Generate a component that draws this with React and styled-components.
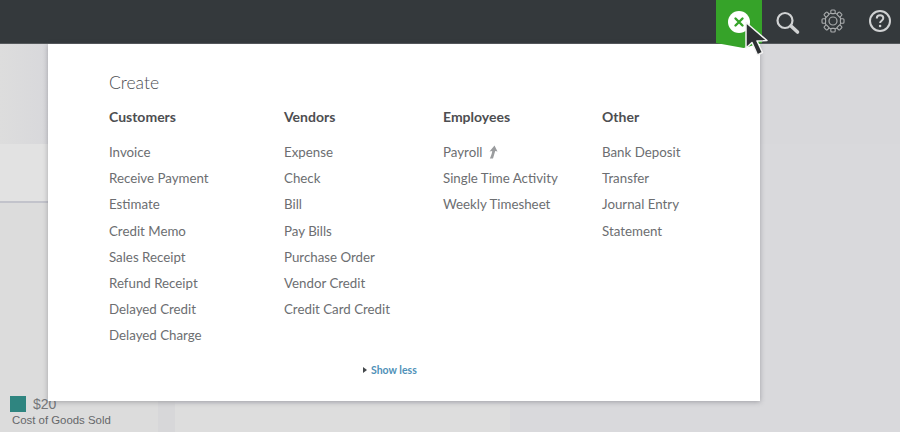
import React from "react";
import styled, { createGlobalStyle } from "styled-components";

const Global = createGlobalStyle`
  html, body { margin: 0; padding: 0; background: #d9d9dc; }
  body { font-family: "Lato", "Noto Sans", "Liberation Sans", sans-serif; }
`;

const Page = styled.div`
  position: relative;
  width: 900px;
  height: 432px;
  overflow: hidden;
  background: #d9d9dc;
`;

const TopBar = styled.header`
  height: 43px;
  background: #34393c;
  border-bottom: 1px solid #55595c;
  display: flex;
  justify-content: flex-end;
  align-items: flex-start;
`;

const CreateTab = styled.div`
  width: 46px;
  height: 48px;
  background: #36a329;
  clip-path: polygon(0 0, 100% 0, 100% 43px, 60% 48px, 0 43px);
  display: flex;
  justify-content: center;
  padding-top: 11px;
  box-sizing: border-box;
  margin-right: 12px;
  position: relative;
  z-index: 3;
`;

const CloseCircle = styled.div`
  width: 22px;
  height: 22px;
  border-radius: 50%;
  background: #fff;
  display: flex;
  align-items: center;
  justify-content: center;
`;

const ToolIcon = styled.div`
  width: 28px;
  height: 28px;
  margin-top: 7px;
  margin-right: ${(p) => p.$gap}px;
  color: ${(p) => p.$color || "#d0d2d3"};
`;

const Backdrop = styled.main`
  height: 388px;
  display: flex;
  flex-direction: column;
  background: #d9d9dc;
`;

const TopBand = styled.div`
  height: 100px;
  background: linear-gradient(90deg, #dddddd 0, #d8d8db 48px);
`;

const LightRow = styled.div`
  width: 48px;
  height: 57px;
  background: #e2e2e2;
  border-bottom: 2px solid #c2c3cb;
`;

const Spacer = styled.div`
  flex: 1;
  background: linear-gradient(90deg, #dcdcdc 0, #dcdcdc 158px, #d7d7d9 158px, #d7d7d9 175px, #d9d9dc 175px);
`;

const Legend = styled.div`
  position: absolute;
  left: 10px;
  top: 396px;
  z-index: 1;
`;

const LegendTop = styled.div`
  display: flex;
  align-items: center;
  gap: 7px;
`;

const Swatch = styled.span`
  width: 16px;
  height: 16px;
  background: #2f8580;
`;

const Amount = styled.span`
  font-size: 14px;
  line-height: 16px;
  color: #747679;
  font-family: "Liberation Sans", sans-serif;
`;

const LegendLabel = styled.div`
  font-family: "Liberation Sans", sans-serif;
  font-size: 11.4px;
  line-height: 14px;
  color: #65676a;
  margin: 1px 0 0 2px;
`;

const BottomCard = styled.div`
  position: absolute;
  left: 175px;
  top: 404px;
  width: 335px;
  height: 28px;
  background: #dddddd;
`;

const Panel = styled.section`
  position: absolute;
  left: 48px;
  top: 44px;
  width: 712px;
  height: 357px;
  background: #fff;
  box-shadow: 0 1px 5px rgba(70, 70, 80, 0.4);
  padding: 29px 0 0 61px;
  box-sizing: border-box;
  z-index: 2;
`;

const Title = styled.h2`
  margin: 0;
  font-size: 17.5px;
  line-height: 20px;
  font-weight: 300;
  color: #4c4e51;
`;

const Columns = styled.div`
  display: flex;
  margin-top: 14px;
`;

const Column = styled.div`
  width: ${(p) => p.$w}px;
`;

const Heading = styled.h3`
  margin: 0 0 12px;
  font-size: 14px;
  line-height: 20px;
  font-weight: 700;
  color: #4d4e51;
`;

const Item = styled.div`
  height: 26.2px;
  line-height: 26px;
  font-size: 13.3px;
  color: #6c6e71;
  white-space: nowrap;
  display: flex;
  align-items: center;
  gap: 5px;
`;

const ShowLess = styled.div`
  position: absolute;
  left: 315px;
  top: 319px;
  display: flex;
  align-items: center;
  gap: 4px;
  font-size: 10.5px;
  line-height: 14px;
  font-weight: 700;
  color: #4f91b8;
`;

const Caret = styled.span`
  width: 0;
  height: 0;
  border-left: 4px solid #44484c;
  border-top: 3.5px solid transparent;
  border-bottom: 3.5px solid transparent;
`;

const Cursor = styled.svg`
  position: absolute;
  left: 744px;
  top: 21px;
  z-index: 4;
`;

const columns = [
  { w: 175, title: "Customers", items: ["Invoice", "Receive Payment", "Estimate", "Credit Memo", "Sales Receipt", "Refund Receipt", "Delayed Credit", "Delayed Charge"] },
  { w: 159, title: "Vendors", items: ["Expense", "Check", "Bill", "Pay Bills", "Purchase Order", "Vendor Credit", "Credit Card Credit"] },
  { w: 159, title: "Employees", items: ["Payroll", "Single Time Activity", "Weekly Timesheet"] },
  { w: 120, title: "Other", items: ["Bank Deposit", "Transfer", "Journal Entry", "Statement"] },
];

const teeth = Array.from({ length: 8 }, (_, i) => i * 45);

export default function App() {
  return (
    <Page>
      <Global />
      <TopBar>
        <CreateTab>
          <CloseCircle>
            <svg width="12" height="12" viewBox="0 0 12 12">
              <path d="M2.5 2.5l7 7M9.5 2.5l-7 7" stroke="#36a329" strokeWidth="2.4" strokeLinecap="round" />
            </svg>
          </CloseCircle>
        </CreateTab>
        <ToolIcon $gap={17}>
          <svg width="28" height="28" viewBox="0 0 28 28" fill="none">
            <circle cx="11" cy="13.5" r="7.5" stroke="currentColor" strokeWidth="2.2" />
            <path d="M17 19l6.500 6" stroke="currentColor" strokeWidth="3.6" strokeLinecap="round" />
          </svg>
        </ToolIcon>
        <ToolIcon $gap={19} $color="#a9acad">
          <svg width="28" height="28" viewBox="0 0 28 28" fill="none" stroke="currentColor">
            <circle cx="14" cy="14" r="4" strokeWidth="1.2" />
            <circle cx="14" cy="14" r="8" strokeWidth="1.2" />
            {teeth.map((a) => (
              <rect key={a} x="11.8" y="3" width="4.4" height="3.6" rx="1" strokeWidth="1.1" fill="#34393c" transform={`rotate(${a} 14 14)`} />
            ))}
          </svg>
        </ToolIcon>
        <ToolIcon $gap={6}>
          <svg width="28" height="28" viewBox="0 0 28 28" fill="none">
            <circle cx="14" cy="14" r="10" stroke="currentColor" strokeWidth="2" />
            <path d="M10.8 11.4c0-2 1.4-3.200 3.300-3.200s3.200 1.200 3.200 2.900c0 2.600-3.200 2.600-3.200 5" stroke="currentColor" strokeWidth="2" />
            <circle cx="14.100" cy="19" r="1.300" fill="currentColor" />
          </svg>
        </ToolIcon>
      </TopBar>
      <Backdrop>
        <TopBand />
        <LightRow />
        <Spacer />
      </Backdrop>
      <BottomCard />
      <Legend>
        <LegendTop>
          <Swatch />
          <Amount>$20</Amount>
        </LegendTop>
        <LegendLabel>Cost of Goods Sold</LegendLabel>
      </Legend>
      <Panel>
        <Title>Create</Title>
        <Columns>
          {columns.map((c) => (
            <Column key={c.title} $w={c.w}>
              <Heading>{c.title}</Heading>
              {c.items.map((it) => (
                <Item key={it}>
                  {it}
                  {it === "Payroll" && (
                    <svg width="11" height="14" viewBox="0 0 11 14">
                      <path d="M7.500 0.500L10.500 6.500L8.200 6L6 13.500H2.800C4 11 5 8.500 5.200 6L2.500 6.500z" fill="#9a9c9e" />
                    </svg>
                  )}
                </Item>
              ))}
            </Column>
          ))}
        </Columns>
        <ShowLess>
          <Caret />
          Show less
        </ShowLess>
      </Panel>
      <Cursor width="26" height="38" viewBox="0 0 26 38">
        <path d="M2 1.500L2 27L8 21.500L13.500 34L18.500 31.500L13 20L23 19.500Z" fill="#2d3033" stroke="#f4f4f4" strokeWidth="1.500" strokeLinejoin="round" />
      </Cursor>
    </Page>
  );
}
